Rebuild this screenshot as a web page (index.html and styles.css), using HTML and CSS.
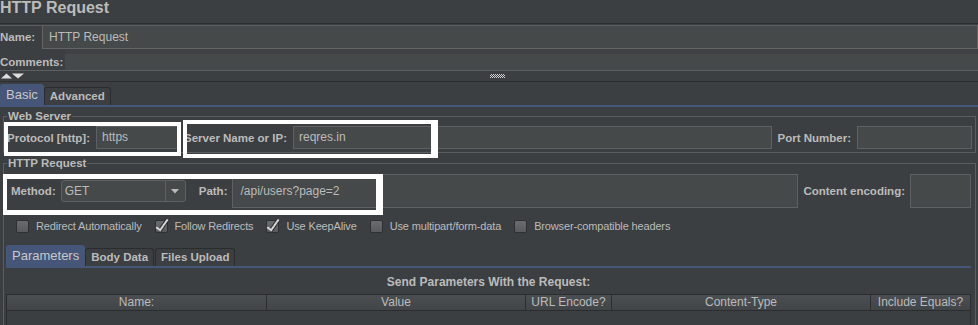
FILE: index.html
```html
<!DOCTYPE html>
<html lang="en">
<head>
  <meta charset="UTF-8" />
  <meta name="viewport" content="width=device-width, initial-scale=1.0" />
  <title>HTTP Request</title>
  <link rel="stylesheet" href="styles.css">
</head>
<body>
  <div class="page">
    <h1 class="title">HTTP Request</h1>
    <div class="rule"></div>

    <div class="name-row">
      <span class="lbl">Name:</span>
      <div class="name-field">HTTP Request</div>
    </div>
    <div class="comments-row">
      <span class="lbl">Comments:</span>
      <div class="comments-area"></div>
    </div>

    <div class="splitter">
      <svg class="split-arrows" width="24" height="6" viewBox="0 0 24 6">
        <polygon points="1,5.5 6.5,0.5 12,5.5" fill="#dedede" />
        <polygon points="12,0.5 24,0.5 18,5.5" fill="#dedede" />
      </svg>
      <div class="grip"></div>
    </div>

    <div class="tabs top-tabs">
      <div class="tab active">Basic</div>
      <div class="tab">Advanced</div>
    </div>
    <div class="tab-line"></div>

    <fieldset class="group web-server">
      <legend>Web Server</legend>
      <div class="row">
        <span class="lbl">Protocol [http]:</span>
        <div class="field protocol">https</div>
        <span class="lbl">Server Name or IP:</span>
        <div class="field grow">reqres.in</div>
        <span class="lbl">Port Number:</span>
        <div class="field port"></div>
      </div>
    </fieldset>

    <fieldset class="group http-request">
      <legend>HTTP Request</legend>
      <div class="row method-row">
        <span class="lbl">Method:</span>
        <div class="combo">
          <span class="combo-value">GET</span>
          <span class="combo-btn">
            <svg width="8" height="5" viewBox="0 0 8 5"><polygon points="0,0 8,0 4,4.5" fill="#bbbbbb" /></svg>
          </span>
        </div>
        <span class="lbl">Path:</span>
        <div class="field tall grow">/api/users?page=2</div>
        <span class="lbl">Content encoding:</span>
        <div class="field tall encoding"></div>
      </div>

      <div class="checks">
        <div class="check"><span class="box"></span>Redirect Automatically</div>
        <div class="check"><span class="box on"></span>Follow Redirects</div>
        <div class="check"><span class="box on"></span>Use KeepAlive</div>
        <div class="check"><span class="box"></span>Use multipart/form-data</div>
        <div class="check"><span class="box"></span>Browser-compatible headers</div>
      </div>

      <div class="params">
        <div class="tabs">
          <div class="tab active">Parameters</div>
          <div class="tab">Body Data</div>
          <div class="tab">Files Upload</div>
        </div>
        <div class="tab-line"></div>
        <div class="params-title">Send Parameters With the Request:</div>
        <div class="table">
          <div class="thead">
            <div>Name:</div>
            <div>Value</div>
            <div>URL Encode?</div>
            <div>Content-Type</div>
            <div>Include Equals?</div>
          </div>
          <div class="tbody"></div>
        </div>
      </div>
    </fieldset>

    <div class="mark mark-protocol"></div>
    <div class="mark mark-server"></div>
    <div class="mark mark-method"></div>
  </div>
</body>
</html>
```

FILE: styles.css
```css
body {
  margin: 0;
  background: #3c3f41;
  color: #bbbbbb;
  font-family: "Liberation Sans", Arial, sans-serif;
  font-size: 12px;
  height: 325px;
  overflow: hidden;
}
.page {
  position: relative;
}
.title {
  margin: 0;
  height: 16px;
  font-size: 16px;
  line-height: 16px;
  font-weight: bold;
}
.rule {
  margin-top: 7px;
  margin-bottom: 1px;
  height: 1px;
  background: #2b2d2f;
}
.lbl {
  font-weight: bold;
  font-size: 11.5px;
  white-space: nowrap;
}

/* name + comments */
.name-row {
  display: flex;
  height: 23px;
  border-top: 1px solid #5c5f61;
}
.name-row .lbl {
  width: 42px;
  line-height: 23px;
}
.name-field {
  flex: 1;
  box-sizing: border-box;
  background: #45494a;
  border: 1px solid #646464;
  border-top: none;
  padding-left: 6px;
  line-height: 22px;
}
.comments-row {
  display: flex;
  height: 21px;
}
.comments-row .lbl {
  width: 65px;
  align-self: flex-end;
  line-height: 16px;
}
.comments-area {
  flex: 1;
  background: #45494a;
  border-top: 5px solid #3f4244;
}

/* splitter */
.splitter {
  display: flex;
  align-items: center;
  height: 10px;
  border-top: 1px solid #5d6062;
  border-bottom: 1px solid #2b2d2f;
}
.split-arrows {
  display: block;
}
.grip {
  margin-left: 466px;
  width: 15px;
  height: 4px;
  background-image: repeating-conic-gradient(#d0d0d0 0 25%, transparent 0 50%);
  background-size: 2px 2px;
}

/* tabs */
.tabs {
  display: flex;
  align-items: flex-end;
  height: 21px;
}
.top-tabs {
  margin-top: 2px;
}
.tab {
  box-sizing: border-box;
  height: 18px;
  padding: 0 5px;
  border: 1px solid #2a2c2e;
  border-bottom: none;
  border-radius: 3px 3px 0 0;
  font-weight: bold;
  font-size: 11.5px;
  line-height: 17px;
  white-space: nowrap;
}
.tab + .tab {
  margin-left: 1px;
}
.tab.active {
  height: 21px;
  background: #465679;
  border-color: #465679;
  color: #c8c8c8;
  font-weight: normal;
  font-size: 13px;
  line-height: 19px;
}
.tab.active + .tab {
  margin-left: 0;
}
.tab-line {
  height: 2px;
  background: #465679;
}

/* titled groups */
.group {
  min-width: 0;
  border: 1px solid #5b5e60;
}
.group legend {
  padding: 0 1px;
  font-weight: bold;
  font-size: 11.5px;
  line-height: 14px;
}
.web-server {
  margin: 2px 2px 0 3px;
  padding: 3px;
}
.http-request {
  margin: 3px 2px 0 3px;
  padding: 4px 4px 0 2px;
}
.http-request legend {
  margin-left: 1px;
}
.row {
  display: flex;
  align-items: center;
  gap: 6px;
}
.field {
  box-sizing: border-box;
  height: 23px;
  padding: 0 5px;
  background: #45494a;
  border: 1px solid #5e6163;
  line-height: 21px;
  white-space: nowrap;
}
.grow {
  flex: 1;
}
.protocol {
  width: 82px;
}
.port {
  width: 115px;
}

.method-row {
  height: 34px;
  padding-left: 5px;
  gap: 5px;
}
.combo {
  display: flex;
  box-sizing: border-box;
  width: 125px;
  height: 22px;
  margin-right: 8px;
  background: #45494a;
  border: 1px solid #5e6163;
  border-radius: 3px;
}
.combo-value {
  flex: 1;
  padding-left: 3px;
  line-height: 20px;
}
.combo-btn {
  display: flex;
  align-items: center;
  justify-content: center;
  width: 19px;
  border-left: 1px solid #5e6163;
}
.combo-btn svg {
  display: block;
}
.tall {
  height: 34px;
  line-height: 32px;
  padding-left: 7px;
}
.encoding {
  width: 61px;
}

/* checkboxes */
.checks {
  display: flex;
  align-items: center;
  height: 18px;
  margin-top: 9px;
  padding-left: 10px;
}
.check {
  display: flex;
  align-items: center;
  gap: 7px;
  margin-right: 13px;
  font-size: 11px;
  letter-spacing: -0.15px;
  white-space: nowrap;
}
.box {
  position: relative;
  flex: none;
  box-sizing: border-box;
  width: 13px;
  height: 13px;
  border: 1px solid #2e3032;
  border-radius: 2px;
  background: linear-gradient(#696c6f, #575b5d);
}
.box.on::after {
  content: "";
  position: absolute;
  left: 3px;
  top: -4px;
  width: 4px;
  height: 12px;
  border-right: 2px solid #d4d4d4;
  border-bottom: 2px solid #d4d4d4;
  transform: rotate(35deg);
  filter: drop-shadow(1px 0 0 #2a2c2e) drop-shadow(-1px 0 0 #2a2c2e);
}

/* parameters pane */
.params {
  margin-top: 10px;
}
.params-title {
  padding-top: 7px;
  text-align: center;
  font-weight: bold;
  line-height: 14px;
}
.table {
  margin-top: 5px;
  border: 1px solid #2b2d2f;
  border-bottom: none;
}
.thead {
  display: grid;
  grid-template-columns: 260px 259px 86px 259px 1fr;
  height: 15px;
  border-bottom: 1px solid #2b2d2f;
  background: linear-gradient(#4c4f51, #424548);
}
.thead div {
  border-right: 1px solid #2b2d2f;
  text-align: center;
  line-height: 15px;
  white-space: nowrap;
}
.thead div:last-child {
  border-right: none;
}
.tbody {
  height: 40px;
}

/* white annotation frames drawn over the form */
.mark {
  position: absolute;
  box-sizing: border-box;
  border: 4px solid #ffffff;
}
.mark-protocol {
  left: 4px;
  top: 122px;
  width: 177px;
  height: 34px;
}
.mark-server {
  left: 183px;
  top: 120px;
  width: 255px;
  height: 38px;
  border-right-width: 7px;
}
.mark-method {
  left: 3px;
  top: 174px;
  width: 380px;
  height: 41px;
  border-width: 5px 7px 5px 4px;
}
```
